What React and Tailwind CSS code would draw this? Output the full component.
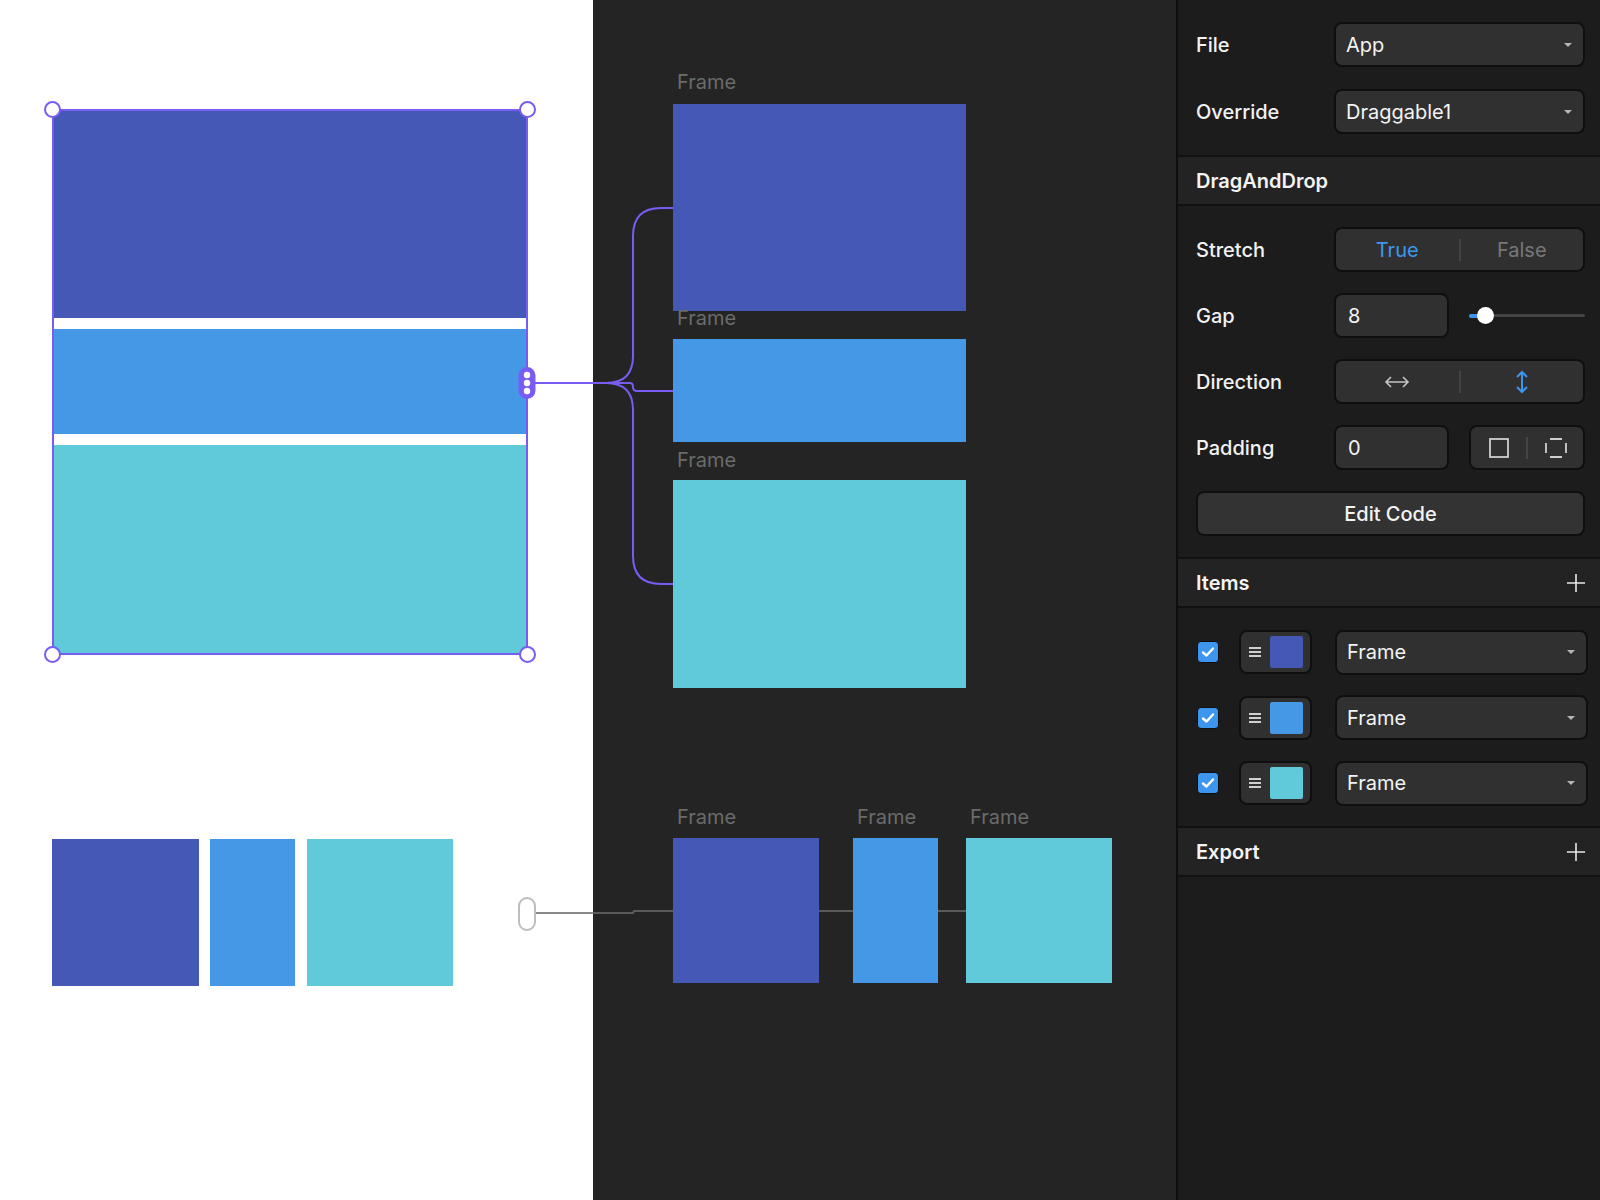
import React from 'react';

const DARK = 'bg-[#4558b5]';
const BLUE = 'bg-[#4498e6]';
const TEAL = 'bg-[#60c9da]';

const Caret = () => (
  <svg width="10" height="6" viewBox="0 0 10 6" className="shrink-0">
    <path d="M1 1 L9 1 L5 5 Z" fill="#b5b5b5" />
  </svg>
);

const Dropdown = ({ value, className = '' }) => (
  <div className={`flex h-[45px] items-center justify-between rounded-[8px] border-2 border-[#0f0f0f] bg-[#303030] pl-[10px] pr-[10px] ${className}`}>
    <span className="text-[20px] text-[#f4f4f4]">{value}</span>
    <Caret />
  </div>
);

const Row = ({ label, children }) => (
  <div className="flex h-[45px] items-center">
    <div className="w-[138px] shrink-0 text-[20px] font-medium text-[#f2f2f2]">{label}</div>
    {children}
  </div>
);

const Divider = () => <div className="h-[22px] w-[2px] bg-[#444]" />;

const Header = ({ title, plus }) => (
  <div className="flex h-[49px] items-center justify-between border-b-2 border-[#111] bg-[#232323] pl-[18px] pr-[15px]">
    <span className="text-[20px] font-semibold text-[#f4f4f4]">{title}</span>
    {plus && (
      <svg width="18" height="18" viewBox="0 0 18 18">
        <path d="M9 0 V18 M0 9 H18" stroke="#e8e8e8" strokeWidth="1.6" />
      </svg>
    )}
  </div>
);

const ItemRow = ({ color }) => (
  <div className="flex h-[44px] items-center">
    <div className="ml-[1px] flex h-[22px] w-[22px] items-center justify-center rounded-[4px] border border-[#0f0f0f] bg-[#3d95ee]">
      <svg width="14" height="12" viewBox="0 0 14 12">
        <path d="M2 6.5 L5.5 9.5 L12 2.5" stroke="white" strokeWidth="2.4" fill="none" strokeLinecap="round" strokeLinejoin="round" />
      </svg>
    </div>
    <div className="ml-[20px] flex h-[44px] w-[73px] items-center rounded-[8px] border-2 border-[#0f0f0f] bg-[#303030] pl-[8px]">
      <svg width="12" height="12" viewBox="0 0 12 12">
        <path d="M0 2 H12 M0 6 H12 M0 10 H12" stroke="#d0d0d0" strokeWidth="1.8" />
      </svg>
      <div className={`ml-[9px] h-[32px] w-[33px] rounded-[2px] ${color}`} />
    </div>
    <Dropdown value="Frame" className="ml-[23px] h-[44px] w-[253px]" />
  </div>
);

const Panel = () => (
  <div className="flex h-[1200px] w-[424px] shrink-0 flex-col border-l-2 border-[#0e0e0e] bg-[#1c1c1c]">
    <div className="flex flex-col gap-[22px] border-b-2 border-[#111] pb-[21px] pl-[18px] pr-[15px] pt-[22px]">
      <Row label="File"><Dropdown value="App" className="flex-1" /></Row>
      <Row label="Override"><Dropdown value="Draggable1" className="flex-1" /></Row>
    </div>
    <Header title="DragAndDrop" />
    <div className="flex flex-col gap-[21px] border-b-2 border-[#111] pb-[21px] pl-[18px] pr-[15px] pt-[21px]">
      <Row label="Stretch">
        <div className="flex h-[45px] flex-1 items-center rounded-[8px] border-2 border-[#0f0f0f] bg-[#303030] text-[20px]">
          <div className="flex-1 text-center text-[#3d97ef]">True</div>
          <Divider />
          <div className="flex-1 text-center text-[#787878]">False</div>
        </div>
      </Row>
      <Row label="Gap">
        <div className="flex h-[45px] w-[115px] items-center rounded-[8px] border-2 border-[#0f0f0f] bg-[#303030] pl-[12px] text-[20px] text-[#f4f4f4]">8</div>
        <div className="relative ml-[20px] flex h-[20px] flex-1 items-center">
          <div className="h-[3px] w-full rounded-full bg-[#454545]" />
          <div className="absolute left-0 top-[8px] h-[4px] w-[16px] rounded-full bg-[#3d95ee]" />
          <div className="absolute left-[8px] top-[1px] h-[17px] w-[17px] rounded-full bg-white shadow" />
        </div>
      </Row>
      <Row label="Direction">
        <div className="flex h-[45px] flex-1 items-center rounded-[8px] border-2 border-[#0f0f0f] bg-[#303030]">
          <div className="flex flex-1 justify-center">
            <svg width="26" height="14" viewBox="0 0 26 14">
              <path d="M2 7 H24 M7 2 L2 7 L7 12 M19 2 L24 7 L19 12" stroke="#c4c4c4" strokeWidth="1.6" fill="none" />
            </svg>
          </div>
          <Divider />
          <div className="flex flex-1 justify-center">
            <svg width="14" height="24" viewBox="0 0 14 24">
              <path d="M7 2 V22 M2 7 L7 2 L12 7 M2 17 L7 22 L12 17" stroke="#3d95ee" strokeWidth="2" fill="none" />
            </svg>
          </div>
        </div>
      </Row>
      <Row label="Padding">
        <div className="flex h-[45px] w-[115px] items-center rounded-[8px] border-2 border-[#0f0f0f] bg-[#303030] pl-[12px] text-[20px] text-[#f4f4f4]">0</div>
        <div className="ml-[20px] flex h-[45px] w-[116px] items-center rounded-[8px] border-2 border-[#0f0f0f] bg-[#303030]">
          <div className="flex flex-1 justify-center">
            <svg width="20" height="20" viewBox="0 0 20 20">
              <rect x="1" y="1" width="18" height="18" stroke="#cfcfcf" strokeWidth="1.8" fill="none" />
            </svg>
          </div>
          <Divider />
          <div className="flex flex-1 justify-center">
            <svg width="22" height="20" viewBox="0 0 22 20">
              <path d="M5 1 H17 M5 19 H17 M1 5 V15 M21 5 V15" stroke="#cfcfcf" strokeWidth="1.8" fill="none" />
            </svg>
          </div>
        </div>
      </Row>
      <div className="flex h-[45px] items-center justify-center rounded-[8px] border-2 border-[#0f0f0f] bg-[#333] text-[20px] font-medium text-[#f4f4f4]">
        Edit Code
      </div>
    </div>
    <Header title="Items" plus />
    <div className="flex flex-col gap-[21.5px] border-b-2 border-[#111] pb-[21px] pl-[18px] pr-[11px] pt-[22px]">
      <ItemRow color={DARK} />
      <ItemRow color={BLUE} />
      <ItemRow color={TEAL} />
    </div>
    <Header title="Export" plus />
  </div>
);

const Handle = ({ className }) => (
  <div className={`absolute h-[17px] w-[17px] rounded-full border-2 border-[#7a5cf5] bg-white ${className}`} />
);

const FrameLabel = ({ children, className = '' }) => (
  <div className={`pl-[4px] text-[20px] leading-[24px] text-[#6b6b6b] ${className}`}>{children}</div>
);

const Connectors = () => (
  <svg className="pointer-events-none absolute left-0 top-0" width="1176" height="1200" viewBox="0 0 1176 1200">
    <g stroke="#7a5cf5" strokeWidth="2" fill="none">
      <path d="M527 383 L606 383 Q633 383 633 356 L633 236 Q633 208 661 208 L673 208" />
      <path d="M606 383 Q633 383 633 410 L633 556 Q633 584 661 584 L673 584" />
      <path d="M606 383 L630 383 Q633 383 633 387 Q633 391 637 391 L673 391" />
    </g>
    <g stroke="#5a5a5a" strokeWidth="2" fill="none">
      <path d="M536 913 L633 913 L634 911 L673 911" />
      <path d="M819 911 L853 911" />
      <path d="M938 911 L966 911" />
    </g>
    <path d="M536 913 L593 913" stroke="#8a8a8a" strokeWidth="2" />
    <rect x="518.5" y="367" width="17" height="32" rx="8.5" fill="#7a5cf5" />
    <circle cx="527" cy="375" r="3.2" fill="white" />
    <circle cx="527" cy="383" r="3.2" fill="white" />
    <circle cx="527" cy="391" r="3.2" fill="white" />
    <rect x="519" y="898" width="16" height="32" rx="8" fill="white" stroke="#bdbdbd" strokeWidth="2" />
  </svg>
);

export default function App() {
  return (
    <div className="flex h-[1200px] w-[1600px] overflow-hidden" style={{ fontFamily: 'Inter, "Noto Sans", sans-serif' }}>
      <div className="relative flex shrink-0">
        <div className="h-[1200px] w-[593px] bg-white pl-[52px] pt-[110px]">
          <div className="relative ml-[1px] w-[474px]">
            <div className="flex flex-col gap-[11px]">
              <div className={`h-[208px] ${DARK}`} />
              <div className={`h-[105px] ${BLUE}`} />
              <div className={`h-[209px] ${TEAL}`} />
            </div>
            <div className="absolute -left-[1px] -top-[1px] h-[546px] w-[476px] border-2 border-[#7a5cf5]" />
            <Handle className="-left-[9px] -top-[9px]" />
            <Handle className="-right-[9px] -top-[9px]" />
            <Handle className="-bottom-[9px] -left-[9px]" />
            <Handle className="-bottom-[9px] -right-[9px]" />
          </div>
          <div className="mt-[185px] flex gap-[11px]">
            <div className={`h-[147px] w-[147px] ${DARK}`} />
            <div className={`h-[147px] w-[85px] ${BLUE}`} />
            <div className={`ml-[1px] h-[147px] w-[146px] ${TEAL}`} />
          </div>
        </div>
        <div className="h-[1200px] w-[583px] bg-[#242424] pl-[80px] pt-[70px]">
          <div className="w-[293px]">
            <FrameLabel>Frame</FrameLabel>
            <div className={`mt-[10px] h-[207px] ${DARK}`} />
            <FrameLabel className="-mt-[5px]">Frame</FrameLabel>
            <div className={`mt-[9px] h-[103px] ${BLUE}`} />
            <FrameLabel className="mt-[6px]">Frame</FrameLabel>
            <div className={`mt-[8px] h-[208px] ${TEAL}`} />
          </div>
          <div className="mt-[117px] flex">
            <div>
              <FrameLabel>Frame</FrameLabel>
              <div className={`mt-[9px] h-[145px] w-[146px] ${DARK}`} />
            </div>
            <div className="ml-[34px]">
              <FrameLabel className="pl-[3px]">Frame</FrameLabel>
              <div className={`mt-[9px] h-[145px] w-[85px] ${BLUE}`} />
            </div>
            <div className="ml-[28px]">
              <FrameLabel className="pl-[3px]">Frame</FrameLabel>
              <div className={`mt-[9px] h-[145px] w-[146px] ${TEAL}`} />
            </div>
          </div>
        </div>
        <Connectors />
      </div>
      <Panel />
    </div>
  );
}
